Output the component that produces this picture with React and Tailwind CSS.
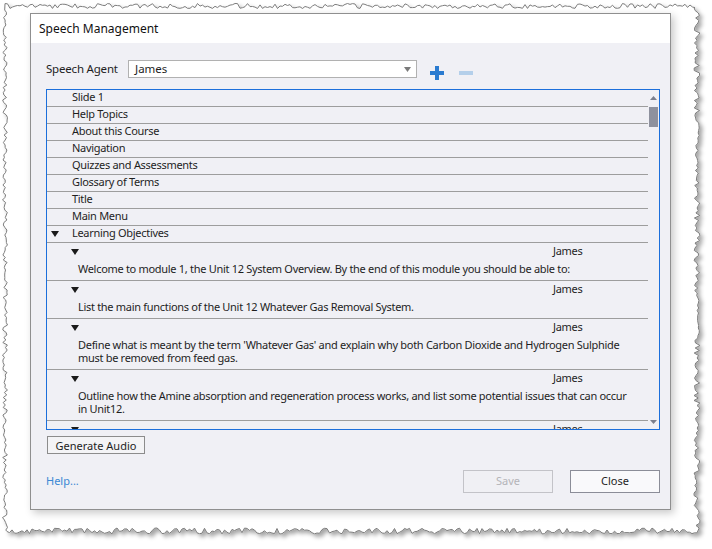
import React from "react";

// jagged "torn paper" outline around the screenshot
function mulberry(seed) {
  let a = seed;
  return function () {
    a |= 0; a = (a + 0x6d2b79f5) | 0;
    let t = Math.imul(a ^ (a >>> 15), 1 | a);
    t = (t + Math.imul(t ^ (t >>> 7), 61 | t)) ^ t;
    return ((t ^ (t >>> 14)) >>> 0) / 4294967296;
  };
}

function tornPath() {
  const r = mulberry(7);
  const pts = [];
  const jit = (base, amp) => base + (r() - 0.5) * amp;
  for (let x = 5; x <= 697; x += 2.5) pts.push([x, jit(6, 5)]);
  for (let y = 8; y <= 530; y += 2.5) pts.push([jit(697, 6), y]);
  for (let x = 697; x >= 5; x -= 2.5) pts.push([x, jit(531, 6)]);
  for (let y = 530; y >= 8; y -= 2.5) pts.push([jit(5, 5), y]);
  return "M" + pts.map(p => p[0].toFixed(1) + " " + p[1].toFixed(1)).join(" L") + " Z";
}
const PAPER = tornPath();

const body = "font-['Noto_Sans',sans-serif] text-[11px] text-[#1e1e1e]";

const topRows = ["Slide 1", "Help Topics", "About this Course", "Navigation", "Quizzes and Assessments", "Glossary of Terms", "Title", "Main Menu"];

const items = [
  ["Welcome to module 1, the Unit 12 System Overview. By the end of this module you should be able to:"],
  ["List the main functions of the Unit 12 Whatever Gas Removal System."],
  ["Define what is meant by the term 'Whatever Gas' and explain why both Carbon Dioxide and Hydrogen Sulphide", "must be removed from feed gas."],
  ["Outline how the Amine absorption and regeneration process works, and list some potential issues that can occur", "in Unit12."],
  [""],
];

function Down({ className = "" }) {
  return (
    <svg width="8" height="6" viewBox="0 0 8 6" className={className}>
      <path d="M0 0 H8 L4 6 Z" fill="#1a1a1a" />
    </svg>
  );
}

export default function App() {
  return (
    <div className="relative w-[712px] h-[549px] bg-white overflow-hidden">
      <svg className="absolute inset-0" width="712" height="549">
        <defs>
          <filter id="sh" x="-5%" y="-5%" width="110%" height="110%">
            <feDropShadow dx="3" dy="3" stdDeviation="2" floodColor="#000" floodOpacity="0.35" />
          </filter>
        </defs>
        <path d={PAPER} fill="#fff" stroke="#7d7d7d" strokeWidth="1" filter="url(#sh)" />
      </svg>

      <div className="relative ml-[30px] mt-[13px] w-[641px] h-[497px] border border-[#8f8f8f] bg-[#f0f0f5] shadow-[3px_3px_8px_rgba(0,0,0,0.22)] flex flex-col">
        <div className="h-[29px] bg-white flex items-center pl-[8px] font-['Noto_Sans',sans-serif] text-[12px] text-[#111]">
          Speech Management
        </div>

        <div className={`flex-1 flex flex-col pl-[15px] pr-[10px] ${body}`}>
          <div className="mt-[17px] h-[18px] flex items-center">
            <span className="w-[82px] text-[11.5px] tracking-[-0.2px]">Speech Agent</span>
            <div className="w-[289px] h-[18px] border border-[#b1b1b1] bg-white flex items-center pl-[6px] pr-[5px]">
              <span className="flex-1 text-[11.5px]">James</span>
              <svg width="7" height="5" viewBox="0 0 7 5"><path d="M0 0 H7 L3.5 5 Z" fill="#7a7a7a" /></svg>
            </div>
            <svg width="14" height="14" viewBox="0 0 14 14" className="ml-[13px] mt-[7px]">
              <path d="M5 0 H9 V5 H14 V9 H9 V14 H5 V9 H0 V5 H5 Z" fill="#2a7bd0" />
            </svg>
            <div className="ml-[15px] mt-[7px] w-[14px] h-[4px] bg-[#b4cfea]" />
          </div>

          <div className="mt-[11px] w-[614px] h-[341px] border border-[#1c6fdb] flex overflow-hidden tracking-[-0.3px]">
            <div className="flex-1 overflow-hidden">
              {topRows.map(t => (
                <div key={t} className="h-[17px] border-b border-[#9d9d9d] flex items-center pl-[25px] pb-[1px] whitespace-nowrap">{t}</div>
              ))}
              <div className="h-[17px] border-b border-[#9d9d9d] flex items-center pl-[4px] pb-[1px] whitespace-nowrap">
                <Down className="mr-[13px] mt-[1px]" />
                Learning Objectives
              </div>
              {items.map((lines, i) => (
                <div key={i} className="border-b border-[#9d9d9d] pb-[5px]">
                  <div className="h-[17px] flex items-center pl-[24px] pb-[1px]">
                    <Down className="mt-[1px]" />
                    <span className="ml-auto w-[95px]">James</span>
                  </div>
                  <div className="mt-[2px] pl-[31px] leading-[13px] whitespace-nowrap">
                    {lines.map((l, j) => <div key={j}>{l}</div>)}
                  </div>
                </div>
              ))}
            </div>
            <div className="w-[11px] flex flex-col items-center">
              <svg width="7" height="4" viewBox="0 0 7 4" className="mt-[6px]"><path d="M0 4 H7 L3.5 0 Z" fill="#7b7f8e" /></svg>
              <div className="mt-[7px] w-[9px] h-[20px] bg-[#8e919e]" />
              <div className="flex-1" />
              <svg width="7" height="4" viewBox="0 0 7 4" className="mb-[5px]"><path d="M0 0 H7 L3.5 4 Z" fill="#7b7f8e" /></svg>
            </div>
          </div>

          <button className="mt-[6px] ml-[1px] w-[98px] h-[18px] border border-[#8c8c8c] bg-[#f4f4f6] text-[11px] text-[#1e1e1e] leading-none">
            Generate Audio
          </button>

          <div className="mt-[16px] h-[23px] flex items-center">
            <span className="text-[#3b88d4]">Help...</span>
            <button className="ml-auto w-[90px] h-[23px] border border-[#c3c3c8] bg-[#f0f0f4] text-[#b4b4b8]">Save</button>
            <button className="ml-[17px] w-[90px] h-[23px] border border-[#8b8d98] bg-[#f9f9fb] text-[#1e1e1e]">Close</button>
          </div>
        </div>
      </div>
    </div>
  );
}
